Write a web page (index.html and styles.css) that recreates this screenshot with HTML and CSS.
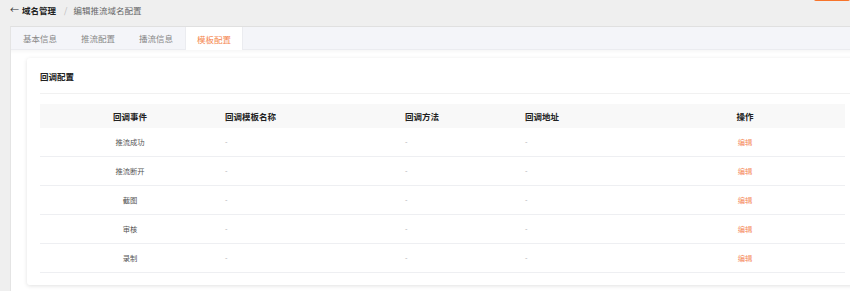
FILE: index.html
```html
<!DOCTYPE html>
<html lang="zh-CN">
<head>
<meta charset="UTF-8">
<meta name="viewport" content="width=device-width, initial-scale=1.0">
<title>编辑推流域名配置</title>
<link rel="stylesheet" href="styles.css">
</head>
<body>

<div class="topbar">
    <div class="crumb">
        <span class="back">&larr;</span>
        <span class="crumb-root">域名管理</span>
        <span class="crumb-sep">/</span>
        <span class="crumb-page">编辑推流域名配置</span>
    </div>
    <div class="edge-btn"></div>
</div>

<div class="main">
    <div class="tabs">
        <a class="tab">基本信息</a>
        <a class="tab">推流配置</a>
        <a class="tab">播流信息</a>
        <a class="tab active">模板配置</a>
    </div>

    <div class="content">
        <div class="card">
            <div class="card-title">回调配置</div>
            <table class="grid">
                <colgroup>
                    <col style="width: 180px">
                    <col style="width: 180px">
                    <col style="width: 120px">
                    <col style="width: 125px">
                    <col style="width: 200px">
                </colgroup>
                <thead>
                    <tr>
                        <th class="center">回调事件</th>
                        <th>回调模板名称</th>
                        <th>回调方法</th>
                        <th>回调地址</th>
                        <th class="center">操作</th>
                    </tr>
                </thead>
                <tbody>
                    <tr>
                        <td class="center">推流成功</td>
                        <td class="dash">-</td>
                        <td class="dash">-</td>
                        <td class="dash">-</td>
                        <td class="center"><a class="link">编辑</a></td>
                    </tr>
                    <tr>
                        <td class="center">推流断开</td>
                        <td class="dash">-</td>
                        <td class="dash">-</td>
                        <td class="dash">-</td>
                        <td class="center"><a class="link">编辑</a></td>
                    </tr>
                    <tr>
                        <td class="center">截图</td>
                        <td class="dash">-</td>
                        <td class="dash">-</td>
                        <td class="dash">-</td>
                        <td class="center"><a class="link">编辑</a></td>
                    </tr>
                    <tr>
                        <td class="center">审核</td>
                        <td class="dash">-</td>
                        <td class="dash">-</td>
                        <td class="dash">-</td>
                        <td class="center"><a class="link">编辑</a></td>
                    </tr>
                    <tr>
                        <td class="center">录制</td>
                        <td class="dash">-</td>
                        <td class="dash">-</td>
                        <td class="dash">-</td>
                        <td class="center"><a class="link">编辑</a></td>
                    </tr>
                </tbody>
            </table>
        </div>
    </div>
</div>

</body>
</html>
```

FILE: styles.css
```css
html, body {
    margin: 0;
    padding: 0;
    height: 100%;
    overflow: hidden;
    background: #efefef;
    font-family: "Noto Sans CJK SC", "Noto Sans", sans-serif;
    color: #333;
}
.topbar {
    display: flex;
    justify-content: space-between;
    height: 26px;
}
.crumb {
    display: flex;
    align-items: center;
    height: 19px;
    padding-left: 10px;
    font-size: 8.5px;
}
.back {
    font-size: 9px;
    color: #333;
    margin-right: 3px;
}
.crumb-root {
    font-weight: bold;
    color: #222;
}
.crumb-sep {
    color: #bbb;
    margin: 0 6px 0 8px;
}
.crumb-page {
    color: #666;
}
.edge-btn {
    width: 36px;
    height: 2px;
    background: #f7742b;
    border-radius: 0 0 2px 2px;
    margin-top: -1px;
}
.main {
    margin-left: 10px;
    height: calc(100% - 27px);
    overflow: hidden;
    background: #fff;
    border-left: 1px solid #e4e4e4;
    border-top: 1px solid #e0e0e0;
}
.tabs {
    display: flex;
    height: 22px;
    background: #f4f5f9;
    border-bottom: 1px solid #ebecf0;
}
.tab {
    display: flex;
    align-items: center;
    padding: 0 12px;
    font-size: 8.5px;
    color: #888;
}
.tab.active {
    background: #fff;
    color: #f5874f;
    border-left: 1px solid #ebecf0;
    border-right: 1px solid #ebecf0;
    margin-bottom: -1px;
    padding: 0 11px;
}
.content {
    padding: 8px 0 0 16px;
    background: linear-gradient(#f7f7f7, #fff 4px);
}
.card {
    width: 840px;
    background: #fff;
    border-radius: 3px;
    box-shadow: 0 1px 4px rgba(0, 0, 0, 0.12);
    padding: 0 0 12px 13px;
}
.card-title {
    height: 35px;
    line-height: 37px;
    font-size: 8.5px;
    font-weight: bold;
    color: #222;
    border-bottom: 1px solid #f1f1f1;
    margin-bottom: 10px;
}
.grid {
    border-collapse: collapse;
    table-layout: fixed;
    width: 805px;
}
.grid th {
    height: 24px;
    padding: 0 5px;
    background: #f8f8f8;
    font-size: 8.5px;
    font-weight: bold;
    color: #222;
    text-align: left;
}
.grid td {
    height: 28px;
    padding: 0 5px;
    font-size: 7.3px;
    color: #555;
    border-bottom: 1px solid #eeeff2;
    text-align: left;
}
.grid .center {
    text-align: center;
}
.grid .dash {
    color: #aaa;
}
.link {
    color: #f58a5b;
}
```
